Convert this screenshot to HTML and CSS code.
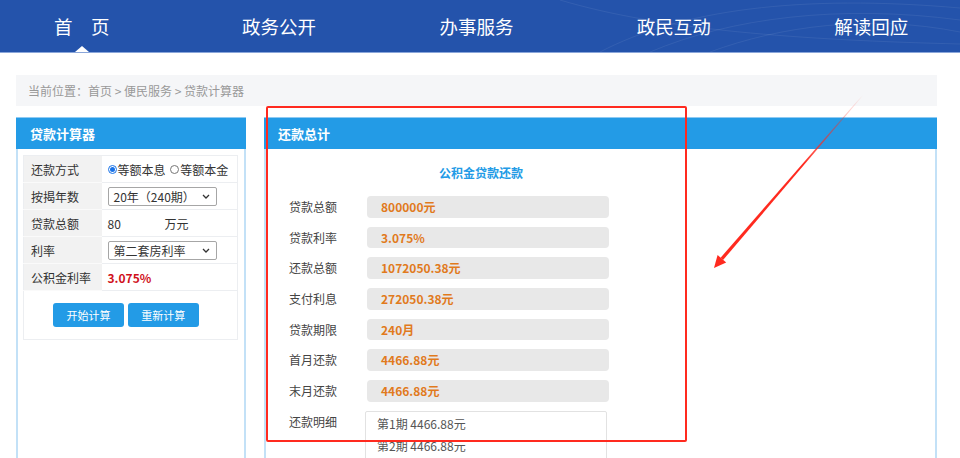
FILE: index.html
```html
<!DOCTYPE html>
<html lang="zh-CN">
<head>
  <meta charset="UTF-8" />
  <title>贷款计算器</title>
  <link rel="stylesheet" href="styles.css">
</head>
<body>

  <!-- Top Nav -->
  <div class="topnav">
    <svg class="nav-deco" width="420" height="52" viewBox="0 0 420 52">
      <path d="M60 52 C140 10 260 -6 420 8" />
      <path d="M110 52 C190 18 300 4 420 20" />
      <path d="M170 52 C240 26 330 14 420 32" />
      <path d="M20 0 C120 30 260 40 420 44" />
    </svg>
    <ul class="nav-list">
      <li class="active">首　页</li>
      <li>政务公开</li>
      <li>办事服务</li>
      <li>政民互动</li>
      <li>解读回应</li>
    </ul>
  </div>

  <div class="wrap">
    <div class="crumb">当前位置：首页 &gt; 便民服务 &gt; 贷款计算器</div>

    <div class="main">
      <!-- Left: calculator -->
      <div class="panel panel-left">
        <div class="panel-hd">贷款计算器</div>
        <div class="panel-bd">
          <table class="calc">
            <tr>
              <th>还款方式</th>
              <td>
                <span class="radio"><i class="dot on"></i>等额本息</span>
                <span class="radio"><i class="dot"></i>等额本金</span>
              </td>
            </tr>
            <tr>
              <th>按揭年数</th>
              <td><div class="sel">20年（240期）<svg class="chev" width="8" height="5" viewBox="0 0 8 5"><path d="M1 1 L4 4 L7 1" /></svg></div></td>
            </tr>
            <tr>
              <th>贷款总额</th>
              <td><span class="amt">80</span>万元</td>
            </tr>
            <tr>
              <th>利率</th>
              <td><div class="sel">第二套房利率<svg class="chev" width="8" height="5" viewBox="0 0 8 5"><path d="M1 1 L4 4 L7 1" /></svg></div></td>
            </tr>
            <tr>
              <th>公积金利率</th>
              <td class="rate">3.075%</td>
            </tr>
            <tr>
              <td colspan="2" class="btns">
                <button class="btn">开始计算</button>
                <button class="btn">重新计算</button>
              </td>
            </tr>
          </table>
        </div>
      </div>

      <!-- Right: result -->
      <div class="panel panel-right">
        <div class="panel-hd">还款总计</div>
        <div class="panel-bd res">
          <div class="res-title">公积金贷款还款</div>
          <div class="res-row"><span class="res-lbl">贷款总额</span><span class="res-val">800000元</span></div>
          <div class="res-row"><span class="res-lbl">贷款利率</span><span class="res-val">3.075%</span></div>
          <div class="res-row"><span class="res-lbl">还款总额</span><span class="res-val">1072050.38元</span></div>
          <div class="res-row"><span class="res-lbl">支付利息</span><span class="res-val">272050.38元</span></div>
          <div class="res-row"><span class="res-lbl">贷款期限</span><span class="res-val">240月</span></div>
          <div class="res-row"><span class="res-lbl">首月还款</span><span class="res-val">4466.88元</span></div>
          <div class="res-row"><span class="res-lbl">末月还款</span><span class="res-val">4466.88元</span></div>
          <div class="res-row detail-row">
            <span class="res-lbl">还款明细</span>
            <div class="detail">
              <p>第1期 4466.88元</p>
              <p>第2期 4466.88元</p>
            </div>
          </div>
        </div>
      </div>
    </div>
  </div>

  <!-- Annotation -->
  <div class="mark-box"></div>
  <svg class="mark-arrow" width="960" height="458" viewBox="0 0 960 458">
    <defs>
      <linearGradient id="fade" gradientUnits="userSpaceOnUse" x1="863" y1="95" x2="714" y2="268">
        <stop offset="0" stop-color="#ff2a1f" stop-opacity="0" />
        <stop offset="0.4" stop-color="#ff2a1f" stop-opacity="1" />
        <stop offset="1" stop-color="#ff2a1f" stop-opacity="1" />
      </linearGradient>
    </defs>
    <polygon points="863.3,95.2 862.7,94.8 720.6,257.7 723.0,260.1" fill="url(#fade)" />
    <polygon points="714,268 726.2,262.4 717.6,255.0" fill="#ff2a1f" />
  </svg>

</body>
</html>
```

FILE: styles.css
```css
* { margin: 0; padding: 0; box-sizing: border-box; }

html, body {
  height: 100%;
  overflow: hidden;
  background: #fff;
  font-family: "Noto Sans CJK SC", "Microsoft YaHei", sans-serif;
  color: #333;
}

/* top nav */
.topnav {
  height: 53px;
  background: #2453ab;
  border-bottom: 1px solid #8aa6da;
  position: relative;
  overflow: hidden;
}

.nav-deco {
  position: absolute;
  top: 0;
  right: 0;
}

.nav-deco path {
  fill: none;
  stroke: rgba(255, 255, 255, 0.07);
  stroke-width: 1;
}

.nav-list {
  list-style: none;
  display: flex;
  margin-left: -17px;
  width: 987px;
  position: relative;
}

.nav-list li {
  flex: 0 0 197.4px;
  height: 52px;
  line-height: 52px;
  text-align: center;
  font-size: 18.5px;
  color: #fff;
  position: relative;
}

.nav-list li.active::after {
  content: "";
  position: absolute;
  left: 50%;
  bottom: 0;
  margin-left: -7px;
  border-left: 7px solid transparent;
  border-right: 7px solid transparent;
  border-bottom: 6px solid #fff;
}

/* page */
.wrap {
  width: 921px;
  margin: 22px 0 0 16px;
}

.crumb {
  height: 31px;
  line-height: 31px;
  background: #f5f6f8;
  padding-left: 12px;
  font-size: 12px;
  color: #999;
}

.main {
  display: flex;
  gap: 18px;
  margin-top: 11px;
}

.panel {
  border: 2px solid #c3e1f7;
  border-top: 0;
  min-height: 360px;
}

.panel-left { width: 230px; }
.panel-right { flex: 1; }

.panel-hd {
  height: 32px;
  line-height: 32px;
  background: #239be6;
  color: #fff;
  font-size: 13px;
  font-weight: bold;
  padding-left: 14px;
  margin: 0 -2px;
  border-top: 1px solid #8fcaf2;
}

.panel-bd { padding: 6px 6px 0 5px; }

/* calculator table */
.calc {
  width: 215px;
  border-collapse: collapse;
  border: 1px solid #eceef1;
  font-size: 12px;
}

.calc th,
.calc td {
  height: 27px;
  border-bottom: 1px solid #eceef1;
  text-align: left;
  font-weight: normal;
}

.calc th {
  width: 78px;
  background: #f2f2f2;
  padding-left: 7px;
  color: #333;
  border-bottom-color: #fafafa;
}

.calc td { padding-left: 6px; color: #333; }

.radio {
  display: inline-flex;
  align-items: center;
  margin-right: 2px;
}

.dot {
  width: 9px;
  height: 9px;
  border: 1px solid #767676;
  border-radius: 50%;
  margin-right: 1px;
  position: relative;
}

.dot.on { border-color: #1a73e8; }

.dot.on::after {
  content: "";
  position: absolute;
  left: 1px;
  top: 1px;
  width: 5px;
  height: 5px;
  border-radius: 50%;
  background: #1a73e8;
}

.sel {
  width: 109px;
  height: 19px;
  line-height: 17px;
  border: 1px solid #a6a6a6;
  border-radius: 2px;
  padding-left: 5px;
  font-size: 12px;
  position: relative;
}

.chev {
  position: absolute;
  right: 6px;
  top: 6px;
}

.chev path {
  fill: none;
  stroke: #333;
  stroke-width: 1.3;
}

.amt {
  display: inline-block;
  width: 57px;
}

.calc td.rate {
  color: #d0111b;
  font-weight: bold;
}

.calc td.btns {
  height: 49px;
  padding-left: 29px;
  border-bottom: 1px solid #eceef1;
}

.btn {
  width: 71px;
  height: 24px;
  border: none;
  border-radius: 3px;
  background: #239be6;
  color: #fff;
  font-family: inherit;
  font-size: 11px;
  margin-right: 1px;
}

/* result */
.res { padding: 14px 0 0 23px; }

.res-title {
  width: 384px;
  text-align: center;
  color: #239be6;
  font-size: 12px;
  font-weight: bold;
  height: 20px;
  line-height: 20px;
  margin-bottom: 13px;
}

.res-row {
  display: flex;
  height: 30.7px;
  font-size: 12px;
}

.res-lbl {
  width: 78px;
  line-height: 21.5px;
  color: #444;
}

.res-val {
  width: 242px;
  height: 21.5px;
  line-height: 21.5px;
  background: #e8e8e8;
  border-radius: 4px;
  padding-left: 14px;
  color: #e17a1d;
  font-weight: bold;
}

.detail-row { height: auto; }

.detail {
  margin-left: -2px;
  width: 242px;
  height: 80px;
  border: 1px solid #e2e2e2;
  border-radius: 2px;
  padding: 1px 0 0 11px;
  color: #555;
}

.detail p {
  line-height: 22px;
}

/* annotation */
.mark-box {
  position: absolute;
  left: 266px;
  top: 106px;
  width: 421px;
  height: 336px;
  border: 2.5px solid #ff2a1f;
  border-radius: 2px;
}

.mark-arrow {
  position: absolute;
  left: 0;
  top: 0;
  pointer-events: none;
}
```
